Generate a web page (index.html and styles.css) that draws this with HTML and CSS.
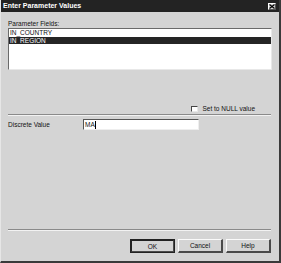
FILE: index.html
```html
<!DOCTYPE html>
<html lang="en">
<head>
    <meta charset="UTF-8">
    <title>Enter Parameter Values</title>
    <link rel="stylesheet" href="styles.css">
</head>
<body>
    <div class="dialog">
        <div class="titlebar">
            <span class="title">Enter Parameter Values</span>
            <span class="close">
                <svg width="6" height="5" viewBox="0 0 6 5">
                    <path d="M0.5 0.5 L5.5 4.5 M5.5 0.5 L0.5 4.5" stroke="#000" stroke-width="1.2"/>
                </svg>
            </span>
        </div>
        <div class="content">
            <div class="label fields-label">Parameter Fields:</div>
            <div class="listbox">
                <div class="item">IN_COUNTRY</div>
                <div class="item selected">IN_REGION</div>
            </div>
            <div class="null-row">
                <span class="checkbox"></span>
                <span class="label">Set to NULL value</span>
            </div>
            <div class="separator"></div>
            <div class="value-row">
                <span class="label value-label">Discrete Value</span>
                <div class="input">MA<span class="caret"></span></div>
            </div>
            <div class="separator bottom-sep"></div>
            <div class="buttons">
                <button class="btn default">OK</button>
                <button class="btn">Cancel</button>
                <button class="btn">Help</button>
            </div>
        </div>
    </div>
</body>
</html>
```

FILE: styles.css
```css
body {
    margin: 0;
    background: #d4d4d4;
    font-family: "Liberation Sans", Arial, sans-serif;
}
.dialog {
    width: 281px;
    height: 263px;
    box-sizing: border-box;
    background: #d4d4d4;
    border-left: 1px solid #e6e6e6;
    border-right: 2px solid #3a3a3a;
    border-bottom: 2px solid #3a3a3a;
    display: flex;
    flex-direction: column;
}
.titlebar {
    height: 12px;
    background: #232323;
    display: flex;
    align-items: center;
    justify-content: space-between;
    padding: 0 3px 0 2px;
}
.title {
    color: #fff;
    font-weight: bold;
    font-size: 7px;
    line-height: 12px;
}
.close {
    width: 8px;
    height: 7px;
    box-sizing: border-box;
    background: #d4d4d4;
    border-top: 1px solid #fff;
    border-left: 1px solid #fff;
    border-right: 1px solid #555;
    border-bottom: 1px solid #555;
    display: flex;
    align-items: center;
    justify-content: center;
}
.content {
    padding: 8px 7px 0 7px;
    display: flex;
    flex-direction: column;
}
.label {
    font-size: 6.5px;
    line-height: 8px;
    color: #111;
}
.fields-label {
    height: 8px;
}
.listbox {
    height: 42px;
    box-sizing: border-box;
    background: #fff;
    border-top: 1px solid #6a6a6a;
    border-left: 1px solid #6a6a6a;
    border-right: 1px solid #e8e8e8;
    border-bottom: 1px solid #e8e8e8;
}
.item {
    font-size: 6.5px;
    line-height: 8px;
    height: 8px;
    padding-left: 1px;
    color: #111;
}
.item.selected {
    background: #252525;
    color: #fff;
    height: 7px;
    line-height: 7px;
}
.null-row {
    margin-top: 35px;
    height: 8px;
    display: flex;
    align-items: center;
    justify-content: flex-end;
    gap: 4px;
    padding-right: 17px;
}
.checkbox {
    width: 7px;
    height: 6px;
    box-sizing: border-box;
    background: #fff;
    border-top: 1px solid #444;
    border-left: 1px solid #444;
    border-right: 1px solid #e8e8e8;
    border-bottom: 1px solid #e8e8e8;
}
.separator {
    margin-top: 1px;
    height: 1px;
    background: #8a8a8a;
    border-bottom: 1px solid #f2f2f2;
    margin-right: 1px;
}
.value-row {
    margin-top: 3px;
    display: flex;
    align-items: center;
    height: 11px;
}
.value-label {
    width: 75px;
}
.input {
    width: 116px;
    height: 11px;
    box-sizing: border-box;
    background: #fff;
    border-top: 1px solid #555;
    border-left: 1px solid #555;
    border-right: 1px solid #eee;
    border-bottom: 1px solid #eee;
    font-size: 6.5px;
    line-height: 9px;
    padding-left: 1px;
    color: #111;
    display: flex;
    align-items: center;
}
.caret {
    width: 1px;
    height: 8px;
    background: #000;
}
.bottom-sep {
    margin-top: 99px;
}
.buttons {
    margin-top: 8px;
    display: flex;
    justify-content: flex-end;
    gap: 3px;
    padding-right: 1px;
}
.btn {
    width: 45px;
    height: 14px;
    box-sizing: border-box;
    padding: 0;
    background: #d4d4d4;
    font-family: "Liberation Sans", Arial, sans-serif;
    font-size: 6.5px;
    color: #111;
    border-top: 1px solid #fafafa;
    border-left: 1px solid #fafafa;
    border-right: 2px solid #4a4a4a;
    border-bottom: 2px solid #4a4a4a;
}
.btn.default {
    outline: 1px solid #222;
    outline-offset: -1px;
    border-top: 2px solid #222;
    border-left: 2px solid #222;
}
```
